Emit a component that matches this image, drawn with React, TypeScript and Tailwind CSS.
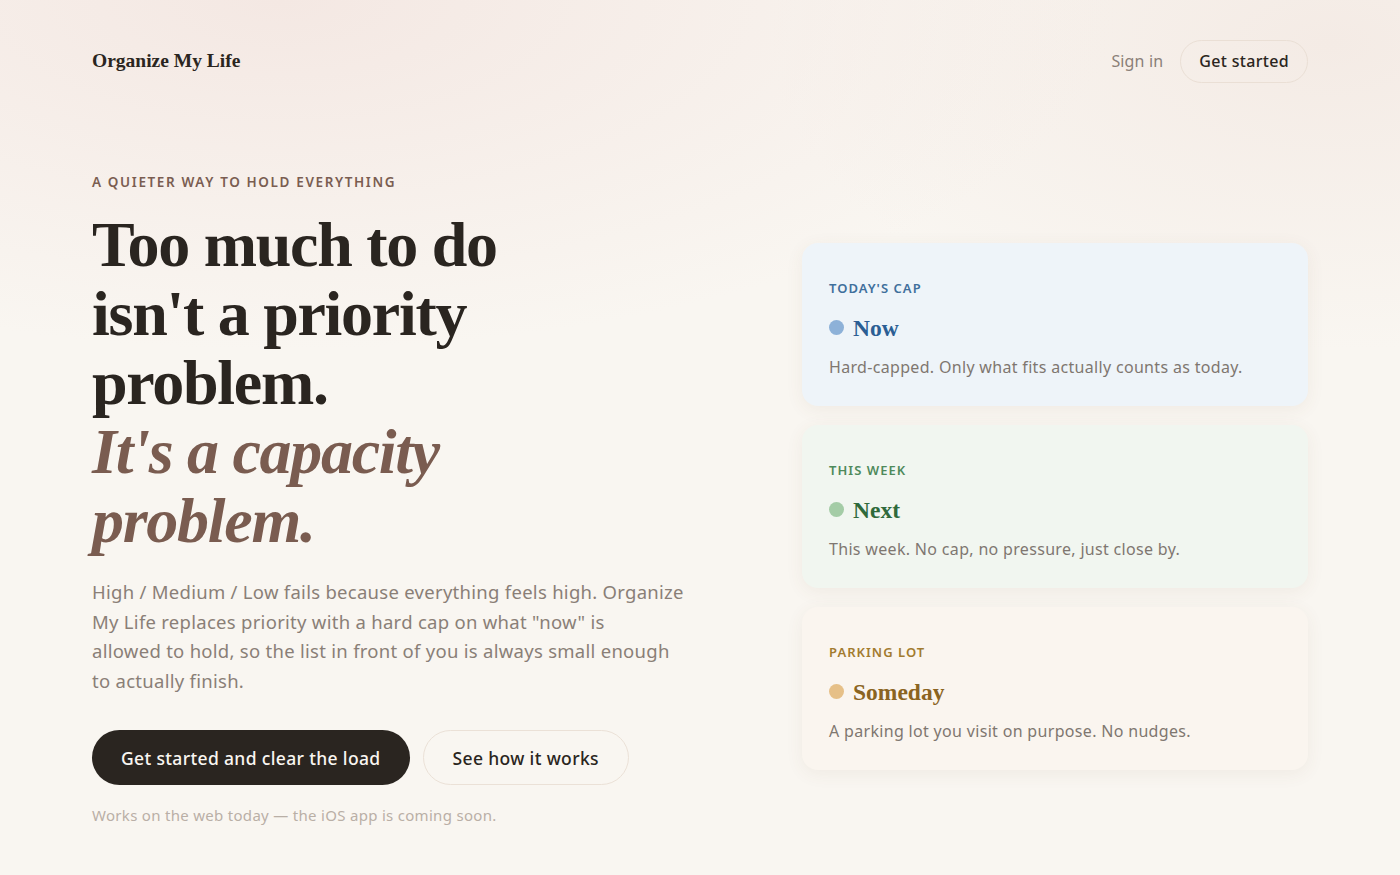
import React from 'react';

const serif = "font-['Liberation_Serif','DejaVu_Serif',serif]";
const sans = "font-['Noto_Sans','Open_Sans',sans-serif]";

type Lane = {
    label: string;
    title: string;
    text: string;
    card: string;
    labelColor: string;
    dot: string;
    titleColor: string;
};

const lanes: Lane[] = [
    {
        label: "Today's cap",
        title: 'Now',
        text: 'Hard-capped. Only what fits actually counts as today.',
        card: 'bg-[#eef4f9]',
        labelColor: 'text-[#3f6f9c]',
        dot: 'bg-[#8db1d8]',
        titleColor: 'text-[#2b5e94]',
    },
    {
        label: 'This week',
        title: 'Next',
        text: 'This week. No cap, no pressure, just close by.',
        card: 'bg-[#f1f6f0]',
        labelColor: 'text-[#4e8a5b]',
        dot: 'bg-[#a4cca6]',
        titleColor: 'text-[#2f6a3b]',
    },
    {
        label: 'Parking lot',
        title: 'Someday',
        text: 'A parking lot you visit on purpose. No nudges.',
        card: 'bg-[#faf5ef]',
        labelColor: 'text-[#a27b2f]',
        dot: 'bg-[#e6c088]',
        titleColor: 'text-[#8b6421]',
    },
];

const LaneCard = ({ lane }: { lane: Lane }) => (
    <div className={`${lane.card} rounded-2xl px-[27px] pt-[37px] pb-[27px] shadow-[0_4px_18px_rgba(120,90,60,0.07)]`}>
        <div className={`${sans} ${lane.labelColor} text-[13px] font-semibold uppercase tracking-[0.08em] leading-4`}>
            {lane.label}
        </div>
        <div className="flex items-center gap-[9px] mt-[18px]">
            <span className={`${lane.dot} w-[15px] h-[15px] rounded-full`} />
            <span className={`${serif} ${lane.titleColor} text-[23.5px] font-bold leading-7`}>{lane.title}</span>
        </div>
        <p className={`${sans} text-[#7f7770] text-[16px] tracking-[0.02em] leading-6 mt-[13px]`}>{lane.text}</p>
    </div>
);

const App = () => {
    return (
        <div className="min-h-screen bg-[#f9f6f1] bg-[radial-gradient(ellipse_60%_40%_at_20%_0%,#f4e8e3_0%,rgba(249,246,241,0)_100%),radial-gradient(ellipse_40%_35%_at_95%_5%,#f4ebe5_0%,rgba(249,246,241,0)_100%)]">
            <div className="px-[92px]">

                {/* Top bar */}
                <header className="h-[122px] flex items-center justify-between">
                    <div className={`${serif} text-[19.5px] font-bold text-[#2a2520]`}>Organize My Life</div>
                    <nav className={`${sans} flex items-center gap-[17px]`}>
                        <a className="text-[16px] tracking-[0.01em] text-[#8a8078]">Sign in</a>
                        <a className="h-[43px] px-[18px] flex items-center rounded-full border border-[#eadfd5] text-[16px] tracking-[0.02em] font-medium text-[#2a2520]">
                            Get started
                        </a>
                    </nav>
                </header>

                <main className="flex items-center justify-between pt-[50px]">
                    {/* Hero copy */}
                    <section className="w-[610px]">
                        <div className={`${sans} text-[13.5px] font-semibold uppercase tracking-[0.12em] text-[#7a5d51]`}>
                            A quieter way to hold everything
                        </div>
                        <h1 className={`${serif} mt-[18px] text-[64px] leading-[69px] font-bold tracking-[-0.02em] text-[#2a2520]`}>
                            Too much to do<br />
                            isn't a priority<br />
                            problem.<br />
                            <em className="text-[#7a5c50]">It's a capacity<br />problem.</em>
                        </h1>
                        <p className={`${sans} mt-[22px] w-[610px] text-[18.5px] tracking-[0.015em] leading-[29.5px] text-[#8a7f77]`}>
                            High / Medium / Low fails because everything feels high. Organize<br />
                            My Life replaces priority with a hard cap on what "now" is<br />
                            allowed to hold, so the list in front of you is always small enough<br />
                            to actually finish.
                        </p>
                        <div className={`${sans} mt-[35px] flex items-center gap-[13px]`}>
                            <button className="h-[55px] px-[29px] rounded-full bg-[#2a2520] text-[#f9f6f1] text-[17.5px] tracking-[0.02em] font-medium">
                                Get started and clear the load
                            </button>
                            <button className="h-[55px] px-[29px] rounded-full border border-[#ebe1d7] text-[#2a2520] text-[17.5px] tracking-[0.02em] font-medium">
                                See how it works
                            </button>
                        </div>
                        <p className={`${sans} mt-[19px] text-[15px] tracking-[0.02em] text-[#b9afa6]`}>
                            Works on the web today — the iOS app is coming soon.
                        </p>
                    </section>

                    {/* Lanes */}
                    <section className="w-[506px] flex flex-col gap-[19px] mt-[14px]">
                        {lanes.map((lane) => (
                            <LaneCard key={lane.title} lane={lane} />
                        ))}
                    </section>
                </main>
            </div>
        </div>
    );
};

export default App;
